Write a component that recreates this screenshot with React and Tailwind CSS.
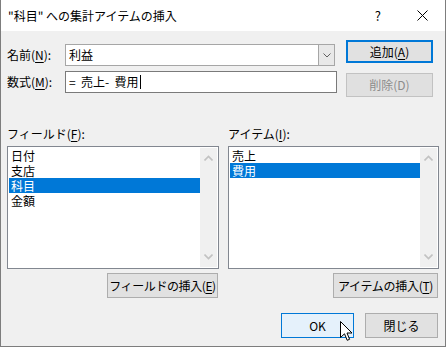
import React from "react";

const F = { fontFamily: '"Noto Sans CJK JP", "Noto Sans", sans-serif' };

function Chevron({ up }) {
  return (
    <svg width="9" height="6" viewBox="0 0 9 6">
      <path d={up ? "M0.5 5.5 L4.5 1.5 L8.5 5.5" : "M0.5 0.5 L4.5 4.5 L8.5 0.5"} fill="none" stroke="#c2c2c2" strokeWidth="1.6" />
    </svg>
  );
}

function ListBox({ items, selected, width }) {
  return (
    <div className={`flex h-[123px] border border-[#828790] bg-white p-[1px] ${width}`}>
      <div className="flex flex-1 flex-col">
        {items.map((it) => (
          <div
            key={it}
            className={`flex h-[15px] items-center overflow-hidden px-[2px] text-[12px] leading-[14px] ${
              it === selected ? "bg-[#0078d7] text-white" : "text-black"
            }`}
          >
            {it}
          </div>
        ))}
      </div>
      <div className="flex w-[17px] flex-col items-center justify-between bg-[#f0f0f0] py-[7px]">
        <Chevron up />
        <Chevron />
      </div>
    </div>
  );
}

function Btn({ children, className = "" }) {
  return (
    <div className={`flex items-center justify-center whitespace-nowrap border text-[12px] leading-[16px] ${className}`}>{children}</div>
  );
}

export default function App() {
  return (
    <div style={F} className="relative h-[347px] w-[446px] overflow-hidden border-x border-b border-[#7d7d7d] bg-[#f0f0f0] text-black">
      {/* title bar */}
      <div className="flex h-[31px] items-center bg-white pl-[7px]">
        <div className="text-[12px] leading-[16px]">"科目" への集計アイテムの挿入</div>
        <div className="ml-auto flex items-center">
          <span className="mr-[36px] text-[13px] leading-[16px]">?</span>
          <svg width="11" height="11" viewBox="0 0 11 11" className="mr-[17px]">
            <path d="M0.5 0.5 L10.5 10.5 M10.5 0.5 L0.5 10.5" stroke="#000" strokeWidth="1" />
          </svg>
        </div>
      </div>

      {/* body */}
      <div className="flex flex-col px-[6px] pt-[9px]">
        <div className="flex">
          <div className="mt-[4px] flex w-[330px] flex-col gap-[5px]">
            <div className="flex h-[22px] items-center">
              <span className="w-[58px] text-[12px] leading-[16px]">
                名前(<span className="underline underline-offset-2">N</span>):
              </span>
              <div className="flex h-[22px] w-[270px] border border-[#a6a6a6] bg-white">
                <div className="flex flex-1 items-center pl-[3px] text-[12px]">利益</div>
                <div className="flex w-[16px] items-center justify-center border-l border-[#a6a6a6] bg-[#e8e8e8]">
                  <svg width="8" height="5" viewBox="0 0 8 5">
                    <path d="M0.5 0.5 L4 4 L7.5 0.5" fill="none" stroke="#606060" strokeWidth="1" />
                  </svg>
                </div>
              </div>
            </div>
            <div className="flex h-[22px] items-center">
              <span className="w-[58px] text-[12px] leading-[16px]">
                数式(<span className="underline underline-offset-2">M</span>):
              </span>
              <div className="flex h-[22px] w-[272px] items-center whitespace-pre border border-[#7a7a7a] bg-white pl-[3px] text-[12px]">
                {"=  売上-  費用"}<span className="ml-[1px] inline-block h-[14px] w-[1px] bg-black" />
              </div>
            </div>
          </div>
          <div className="ml-[9px] flex flex-col">
            <Btn className="h-[23px] w-[87px] border-2 border-[#0078d7] bg-[#e1e1e1]">
              追加(<span className="underline underline-offset-2">A</span>)
            </Btn>
            <Btn className="mt-[10px] h-[24px] w-[87px] border-[#c2c2c2] bg-[#e0e0e0] text-[#8c8c8c]">削除(D)</Btn>
          </div>
        </div>

        {/* lists */}
        <div className="mt-[29px] flex gap-[9px]">
          <div className="flex flex-col">
            <div className="h-[16px] text-[12px] leading-[16px]">
              フィールド(<span className="underline underline-offset-2">F</span>):
            </div>
            <div className="mt-[4px]">
              <ListBox items={["日付", "支店", "科目", "金額"]} selected="科目" width="w-[212px]" />
            </div>
            <div className="mt-[4px] flex justify-end pr-[1px]">
              <Btn className="h-[25px] w-[111px] border-[#adadad] bg-[#e1e1e1] tracking-[-0.4px]">
                フィールドの挿入(<span className="underline underline-offset-2">E</span>)
              </Btn>
            </div>
          </div>
          <div className="flex flex-col">
            <div className="h-[16px] text-[12px] leading-[16px]">
              アイテム(<span className="underline underline-offset-2">I</span>):
            </div>
            <div className="mt-[4px]">
              <ListBox items={["売上", "費用"]} selected="費用" width="w-[211px]" />
            </div>
            <div className="mt-[4px] flex justify-end pr-[1px]">
              <Btn className="h-[25px] w-[105px] border-[#adadad] bg-[#e1e1e1] tracking-[-0.3px]">
                アイテムの挿入(<span className="underline underline-offset-2">T</span>)
              </Btn>
            </div>
          </div>
        </div>

        {/* bottom buttons */}
        <div className="mt-[15px] flex justify-end gap-[11px] pr-[1px]">
          <Btn className="h-[25px] w-[73px] border-[#0078d7] bg-[#e5f1fb]">OK</Btn>
          <Btn className="h-[25px] w-[73px] border-[#adadad] bg-[#e1e1e1]">閉じる</Btn>
        </div>
      </div>

      {/* mouse cursor */}
      <svg className="absolute left-[339px] top-[321px]" width="13" height="21" viewBox="0 0 13 21">
        <path d="M0.5 0.5 L0.5 16.5 L4.5 12.8 L7.2 19.3 L9.6 18.3 L7 12 L12 12 Z" fill="#fff" stroke="#000" strokeWidth="1" strokeLinejoin="miter" />
      </svg>
    </div>
  );
}
